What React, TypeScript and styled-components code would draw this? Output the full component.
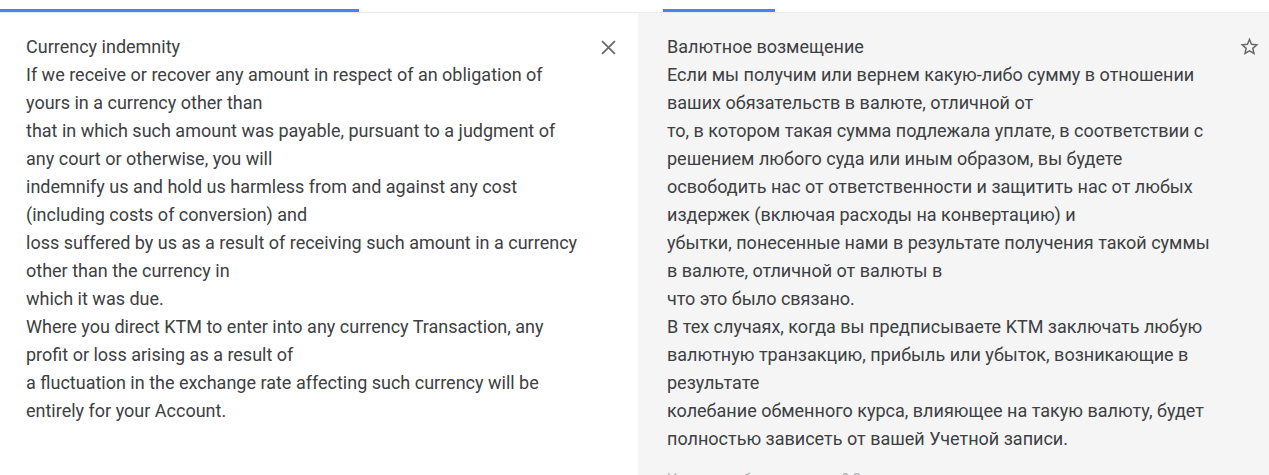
import React from "react";
import styled, { createGlobalStyle } from "styled-components";

const Global = createGlobalStyle`
  html, body { margin: 0; padding: 0; overflow: hidden; background: #fff; }
  body { font-family: Roboto, "Noto Sans", "Liberation Sans", sans-serif; }
`;

const Page = styled.div`
  display: grid;
  grid-template-columns: 638px 1fr;
  height: 475px;
  overflow: hidden;
`;

const Pane = styled.section`
  position: relative;
  display: flex;
  flex-direction: column;
  background: #fff;
`;

const TabStrip = styled.div`
  position: relative;
  height: 12px;
  border-bottom: 1px solid #e8eaed;
  flex: none;
`;

const Indicator = styled.div<{ $left: number; $width: number }>`
  position: absolute;
  bottom: 0;
  left: ${(p) => p.$left}px;
  width: ${(p) => p.$width}px;
  height: 3px;
  background: #4285f4;
`;

const Body = styled.div<{ $shaded?: boolean }>`
  flex: 1;
  background: ${(p) => (p.$shaded ? "#f5f5f5" : "#fff")};
  padding: 20px 40px 0 ${(p) => (p.$shaded ? 29 : 26)}px;
`;

const Text = styled.div`
  font-size: 18px;
  line-height: 28px;
  color: #3c4043;
  white-space: nowrap;
`;

const Footer = styled.div`
  margin-top: 16px;
  font-size: 14px;
  line-height: 20px;
  color: #b0b4b8;
`;

const IconButton = styled.button<{ $right: number; $top: number }>`
  position: absolute;
  right: ${(p) => p.$right}px;
  top: ${(p) => p.$top}px;
  width: 24px;
  height: 24px;
  padding: 0;
  border: 0;
  background: transparent;
  display: flex;
  align-items: center;
  justify-content: center;
  color: #5f6368;
  cursor: pointer;
`;

const source = [
  "Currency indemnity",
  "If we receive or recover any amount in respect of an obligation of",
  "yours in a currency other than",
  "that in which such amount was payable, pursuant to a judgment of",
  "any court or otherwise, you will",
  "indemnify us and hold us harmless from and against any cost",
  "(including costs of conversion) and",
  "loss suffered by us as a result of receiving such amount in a currency",
  "other than the currency in",
  "which it was due.",
  "Where you direct KTM to enter into any currency Transaction, any",
  "profit or loss arising as a result of",
  "a fluctuation in the exchange rate affecting such currency will be",
  "entirely for your Account.",
];

const target = [
  "Валютное возмещение",
  "Если мы получим или вернем какую-либо сумму в отношении",
  "ваших обязательств в валюте, отличной от",
  "то, в котором такая сумма подлежала уплате, в соответствии с",
  "решением любого суда или иным образом, вы будете",
  "освободить нас от ответственности и защитить нас от любых",
  "издержек (включая расходы на конвертацию) и",
  "убытки, понесенные нами в результате получения такой суммы",
  "в валюте, отличной от валюты в",
  "что это было связано.",
  "В тех случаях, когда вы предписываете KTM заключать любую",
  "валютную транзакцию, прибыль или убыток, возникающие в",
  "результате",
  "колебание обменного курса, влияющее на такую валюту, будет",
  "полностью зависеть от вашей Учетной записи.",
];

const CloseIcon = () => (
  <svg width="15" height="15" viewBox="0 0 14 14">
    <path d="M1 1L13 13M13 1L1 13" stroke="#6b6b6b" strokeWidth="1.7" fill="none" />
  </svg>
);

const StarIcon = () => (
  <svg width="19" height="19" viewBox="0 0 24 24">
    <path
      d="M12 3.2l2.6 6.1 6.6.6-5 4.4 1.5 6.5L12 17.4l-5.7 3.4 1.5-6.5-5-4.4 6.6-.6z"
      fill="none"
      stroke="#6b6b6b"
      strokeWidth="1.9"
      strokeLinejoin="miter"
    />
  </svg>
);

export default function App() {
  return (
    <>
      <Global />
      <Page>
        <Pane>
          <TabStrip>
            <Indicator $left={0} $width={359} />
          </TabStrip>
          <Body>
            {source.map((l, i) => (
              <Text key={i}>{l}</Text>
            ))}
          </Body>
          <IconButton $right={18} $top={35} aria-label="Очистить">
            <CloseIcon />
          </IconButton>
        </Pane>
        <Pane>
          <TabStrip>
            <Indicator $left={25} $width={112} />
          </TabStrip>
          <Body $shaded>
            {target.map((l, i) => (
              <Text key={i}>{l}</Text>
            ))}
            <Footer>Нашли ошибку в переводе? Отправить отзыв</Footer>
          </Body>
          <IconButton $right={8} $top={34} aria-label="Сохранить">
            <StarIcon />
          </IconButton>
        </Pane>
      </Page>
    </>
  );
}
